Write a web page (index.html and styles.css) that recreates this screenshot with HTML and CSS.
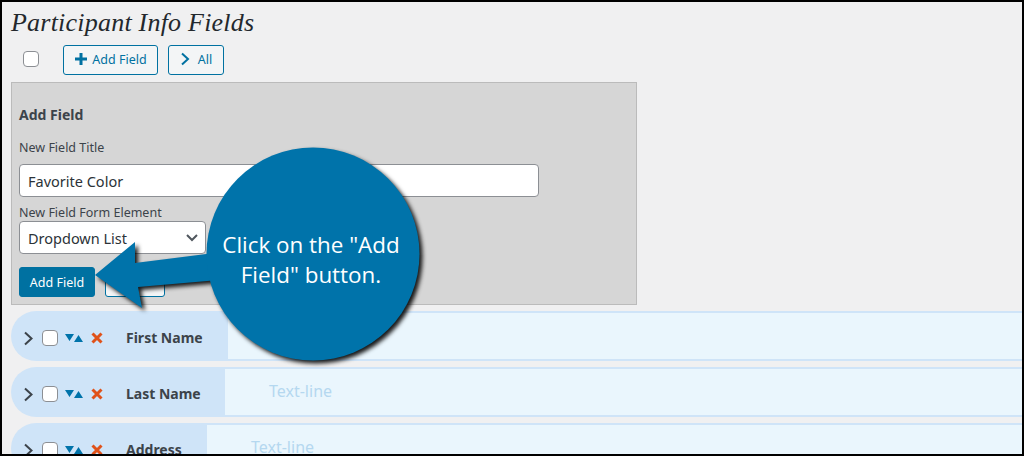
FILE: index.html
```html
<!DOCTYPE html>
<html lang="en">
<head>
  <meta charset="UTF-8">
  <title>Participant Info Fields</title>
  <link rel="stylesheet" href="styles.css">
</head>
<body>

<div class="frame">
  <h1 class="page-title">Participant Info Fields</h1>

  <div class="toolbar">
    <input type="checkbox" class="check toolbar-check">
    <button class="btn btn-plus">
      <svg width="14" height="14" viewBox="0 0 14 14"><path d="M7 1v12M1 7h12" stroke="#0071a1" stroke-width="3" fill="none"/></svg>
      Add Field
    </button>
    <button class="btn btn-all">
      <svg width="10" height="14" viewBox="0 0 10 14"><path d="M2 1.500 8 7l-6 5.500" stroke="#0071a1" stroke-width="2" fill="none"/></svg>
      All
    </button>
  </div>

  <div class="add-panel">
    <h2 class="panel-title">Add Field</h2>
    <label class="field-label title-label">New Field Title</label>
    <input type="text" class="text-input" value="Favorite Color">
    <label class="field-label element-label">New Field Form Element</label>
    <div class="select-box">
      <span>Dropdown List</span>
      <svg width="14" height="10" viewBox="0 0 14 10"><path d="M2 2l5 5 5-5" stroke="#50575e" stroke-width="2" fill="none"/></svg>
    </div>
    <div class="panel-buttons">
      <button class="btn-primary">Add Field</button>
      <button class="btn btn-blank"></button>
    </div>
  </div>

  <div class="field-row">
    <div class="field-head head-first">
      <svg class="chev" width="11" height="15" viewBox="0 0 11 15"><path d="M2 1.500 8.500 7.500 2 13.500" stroke="#3c434a" stroke-width="2" fill="none"/></svg>
      <input type="checkbox" class="check">
      <svg class="sort" width="18" height="10" viewBox="0 0 18 10"><path d="M0 1h9L4.500 8zM9 9h9l-4.500-7z" fill="#0073aa"/></svg>
      <svg class="del" width="12" height="12" viewBox="0 0 12 12"><path d="M1.500 1.500l9 9M10.500 1.500l-9 9" stroke="#e0521a" stroke-width="3" fill="none"/></svg>
      <span class="field-name">First Name</span>
    </div>
    <div class="field-body"><span class="field-type">Text-line</span></div>
  </div>

  <div class="field-row">
    <div class="field-head head-last">
      <svg class="chev" width="11" height="15" viewBox="0 0 11 15"><path d="M2 1.500 8.500 7.500 2 13.500" stroke="#3c434a" stroke-width="2" fill="none"/></svg>
      <input type="checkbox" class="check">
      <svg class="sort" width="18" height="10" viewBox="0 0 18 10"><path d="M0 1h9L4.500 8zM9 9h9l-4.500-7z" fill="#0073aa"/></svg>
      <svg class="del" width="12" height="12" viewBox="0 0 12 12"><path d="M1.500 1.500l9 9M10.500 1.500l-9 9" stroke="#e0521a" stroke-width="3" fill="none"/></svg>
      <span class="field-name">Last Name</span>
    </div>
    <div class="field-body"><span class="field-type">Text-line</span></div>
  </div>

  <div class="field-row">
    <div class="field-head head-address">
      <svg class="chev" width="11" height="15" viewBox="0 0 11 15"><path d="M2 1.500 8.500 7.500 2 13.500" stroke="#3c434a" stroke-width="2" fill="none"/></svg>
      <input type="checkbox" class="check">
      <svg class="sort" width="18" height="10" viewBox="0 0 18 10"><path d="M0 1h9L4.500 8zM9 9h9l-4.500-7z" fill="#0073aa"/></svg>
      <svg class="del" width="12" height="12" viewBox="0 0 12 12"><path d="M1.500 1.500l9 9M10.500 1.500l-9 9" stroke="#e0521a" stroke-width="3" fill="none"/></svg>
      <span class="field-name">Address</span>
    </div>
    <div class="field-body"><span class="field-type">Text-line</span></div>
  </div>

  <!-- callout drawn over the form -->
  <svg class="callout-shape" width="1024" height="456" viewBox="0 0 1024 456">
    <path d="M95 275 135 242 135 263 230 251 230 279 138 287 142 308Z" fill="#0073aa"/>
    <circle cx="313" cy="254" r="106.500" fill="#0073aa"/>
  </svg>
  <div class="callout-text">Click on the "Add<br>Field" button.</div>
</div>

</body>
</html>
```

FILE: styles.css
```css
* {
  box-sizing: border-box;
}

body {
  margin: 0;
  font-family: "Noto Sans", "Open Sans", sans-serif;
  color: #3c434a;
}

.frame {
  position: relative;
  width: 1024px;
  height: 456px;
  border: 2px solid #000;
  background: #f0f0f1;
  padding: 0 0 0 9px;
  overflow: hidden;
}

.page-title {
  margin: 0;
  padding-top: 5px;
  height: 43px;
  font-family: "Liberation Serif", serif;
  font-style: italic;
  font-weight: 400;
  font-size: 26px;
  line-height: 32px;
  letter-spacing: 0.22px;
  color: #23282d;
}

.toolbar {
  display: flex;
  align-items: center;
  height: 30px;
  padding-left: 12px;
}

.check {
  appearance: none;
  flex: none;
  width: 16px;
  height: 16px;
  margin: 0;
  background: #fff;
  border: 1px solid #8c8f94;
  border-radius: 4px;
}

.toolbar-check {
  margin-right: 24px;
  margin-top: -3px;
}

.btn {
  display: flex;
  align-items: center;
  justify-content: center;
  height: 30px;
  padding: 0 0 2px;
  background: #f3f5f6;
  border: 1px solid #0071a1;
  border-radius: 3px;
  color: #0071a1;
  font-family: inherit;
  font-size: 12.500px;
}

.btn-plus {
  width: 95px;
  gap: 4px;
  margin-right: 10px;
}

.btn-all {
  width: 56px;
  gap: 8px;
}

.add-panel {
  width: 626px;
  height: 223px;
  margin-top: 7px;
  padding: 0 7px;
  background: #d6d6d6;
  border: 1px solid #bbb;
}

.panel-title {
  margin: 22px 0 0;
  font-size: 14px;
  line-height: 20px;
  font-weight: 700;
}

.field-label {
  display: block;
  font-size: 12.500px;
  line-height: 16px;
}

.title-label {
  margin-top: 15px;
}

.element-label {
  margin-top: 8px;
  height: 16px;
}

.text-input {
  display: block;
  width: 520px;
  height: 33px;
  margin-top: 8px;
  padding: 0 8px;
  border: 1px solid #8c8f94;
  border-radius: 4px;
  background: #fff;
  color: #2c3338;
  font-family: inherit;
  font-size: 14.500px;
}

.select-box {
  display: flex;
  align-items: center;
  justify-content: space-between;
  width: 187px;
  height: 33px;
  padding: 0 6px 0 8px;
  border: 1px solid #8c8f94;
  border-radius: 4px;
  background: #fff;
  color: #2c3338;
  font-size: 14.500px;
}

.panel-buttons {
  display: flex;
  gap: 10px;
  margin-top: 13px;
}

.btn-primary {
  width: 76px;
  height: 30px;
  padding: 0;
  background: #0071a1;
  border: 1px solid #0071a1;
  border-radius: 3px;
  color: #fff;
  font-family: inherit;
  font-size: 12.500px;
}

.btn-blank {
  width: 60px;
}

.field-row {
  display: flex;
  height: 50px;
  margin-top: 6px;
}

.field-head {
  display: flex;
  align-items: center;
  flex: none;
  padding: 4px 0 0 12px;
  background: #cfe4f8;
  border-radius: 25px 0 0 25px;
}

.head-first {
  width: 217px;
}

.head-last {
  width: 214px;
}

.head-address {
  width: 196px;
}

.chev {
  margin-right: 8px;
}

.sort {
  margin: 0 8px 0 7px;
}

.del {
  margin-right: 23px;
}

.field-name {
  font-size: 14px;
  font-weight: 700;
  margin-top: -1px;
}

.field-body {
  flex: 1;
  padding-left: 44px;
  background: #eaf6fd;
  border-top: 2px solid #cfe4f8;
  border-bottom: 2px solid #cfe4f8;
  color: #b5d8f0;
  font-size: 16px;
  line-height: 44px;
}

.callout-shape {
  position: absolute;
  top: -2px;
  left: -2px;
  filter: drop-shadow(3px 3px 2px rgba(0, 0, 0, 0.9));
}

.callout-text {
  position: absolute;
  top: 228px;
  left: 203px;
  width: 212px;
  font-family: "Open Sans", sans-serif;
  font-size: 22.400px;
  line-height: 30px;
  text-align: center;
  color: #fff;
}
```
